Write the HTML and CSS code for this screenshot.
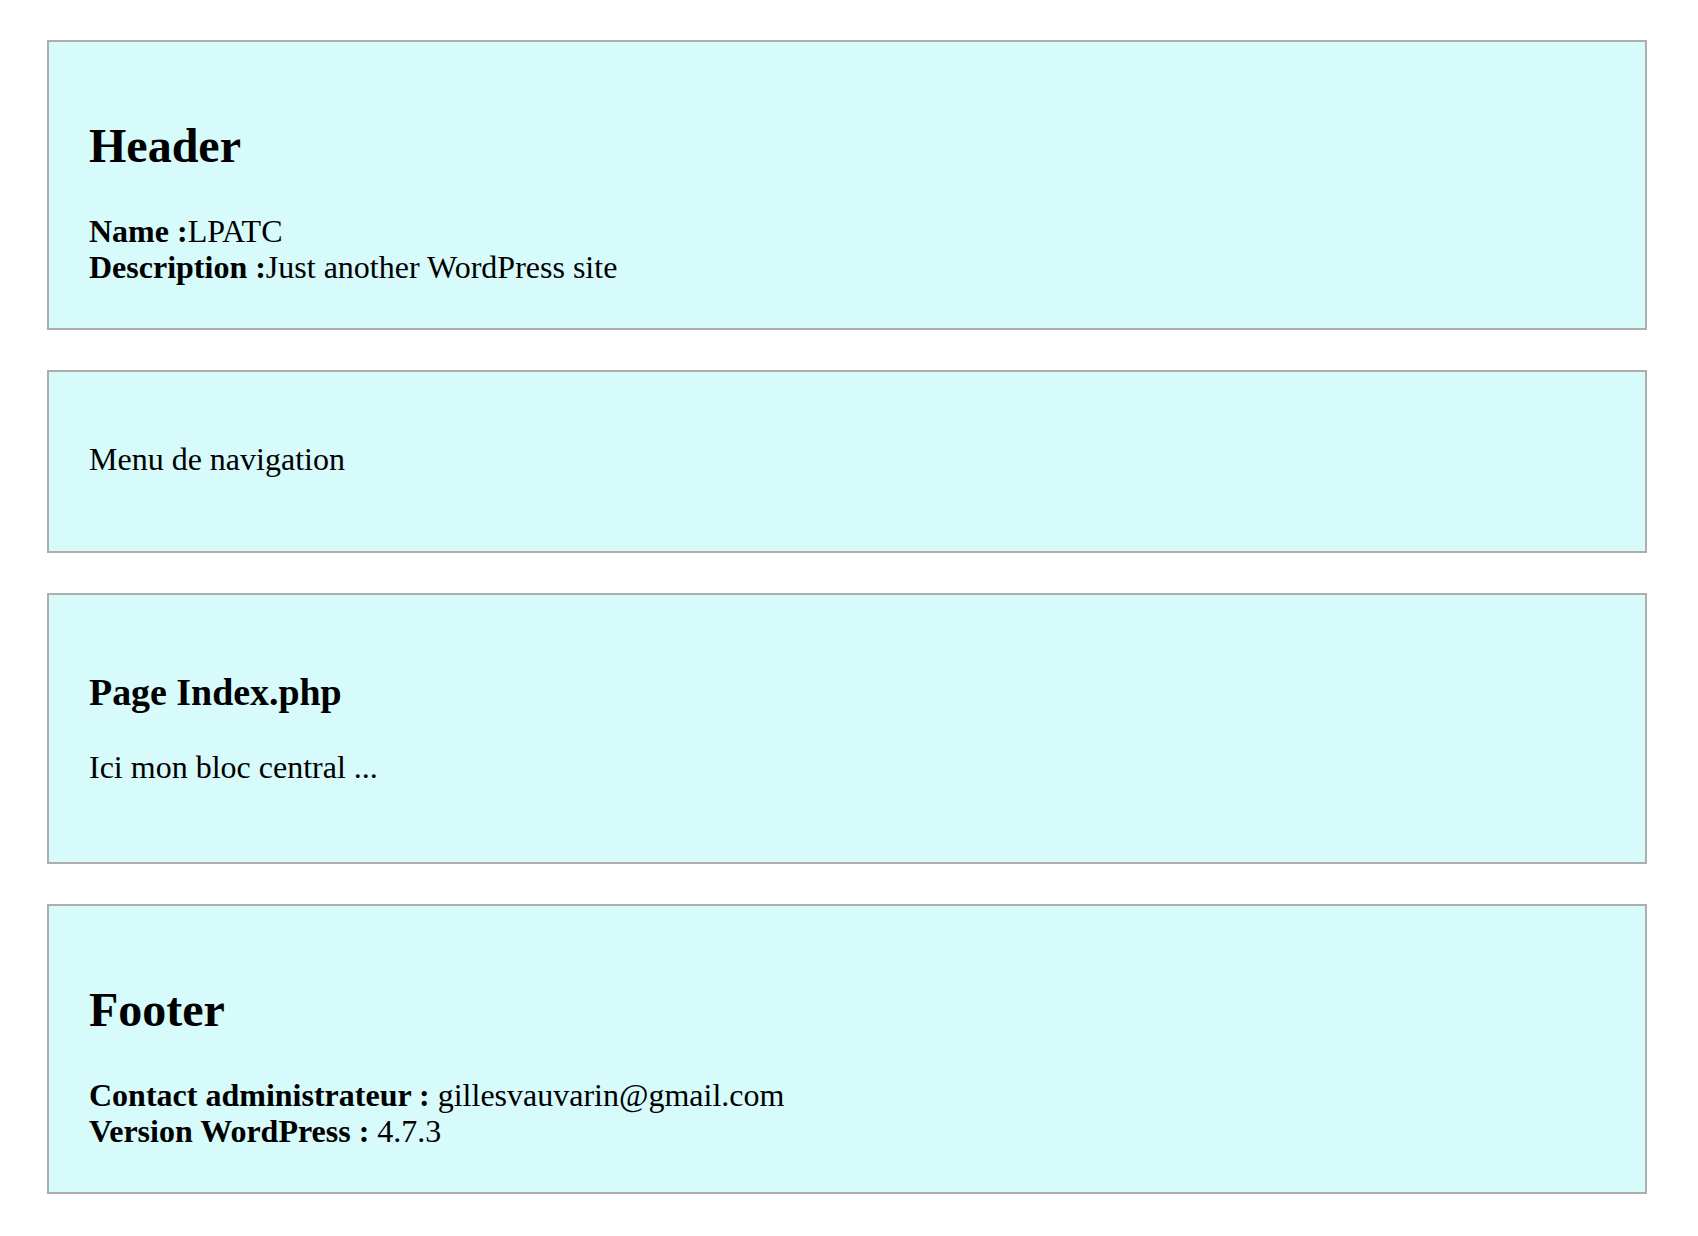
FILE: index.html
```html
<!DOCTYPE html>
<html lang="fr">
<head>
<meta charset="utf-8">
<title>LPATC</title>
<link rel="stylesheet" href="styles.css">
</head>
<body>
<div class="page">
  <header class="box">
    <h1 class="title">Header</h1>
    <div class="lines">
      <div><b>Name :</b>LPATC</div>
      <div><b>Description :</b>Just another WordPress site</div>
    </div>
  </header>
  <nav class="box">
    <p class="text">Menu de navigation</p>
  </nav>
  <main class="box box-main">
    <h3 class="subtitle">Page Index.php</h3>
    <p class="text">Ici mon bloc central ...</p>
  </main>
  <footer class="box">
    <h1 class="title">Footer</h1>
    <div class="lines">
      <div><b>Contact administrateur :</b> gillesvauvarin@gmail.com</div>
      <div><b>Version WordPress :</b> 4.7.3</div>
    </div>
  </footer>
</div>
</body>
</html>
```
FILE: styles.css
```css
html, body {
  margin: 0;
  padding: 0;
  background: #ffffff;
}

body {
  font-family: "Liberation Serif", "Times New Roman", serif;
  color: #000000;
  font-size: 32px;
}

.page {
  display: flex;
  flex-direction: column;
  gap: 40px;
  padding: 40px 0 0 47px;
}

.box {
  box-sizing: border-box;
  width: 1600px;
  background: #d7fafa;
  border: 2px solid #adadad;
  padding: 40px 40px 43px 40px;
}

.title {
  font-size: 48px;
  line-height: 54px;
  font-weight: bold;
  margin: 37px 0 40px 0;
}

.lines {
  line-height: 36px;
}

.text {
  line-height: 36px;
  margin: 29px 0 31px 0;
}

.subtitle {
  font-size: 37.9px;
  line-height: 43px;
  font-weight: bold;
  margin: 36px 0 35px 0;
}

.box-main .text {
  margin-bottom: 34px;
}
```
